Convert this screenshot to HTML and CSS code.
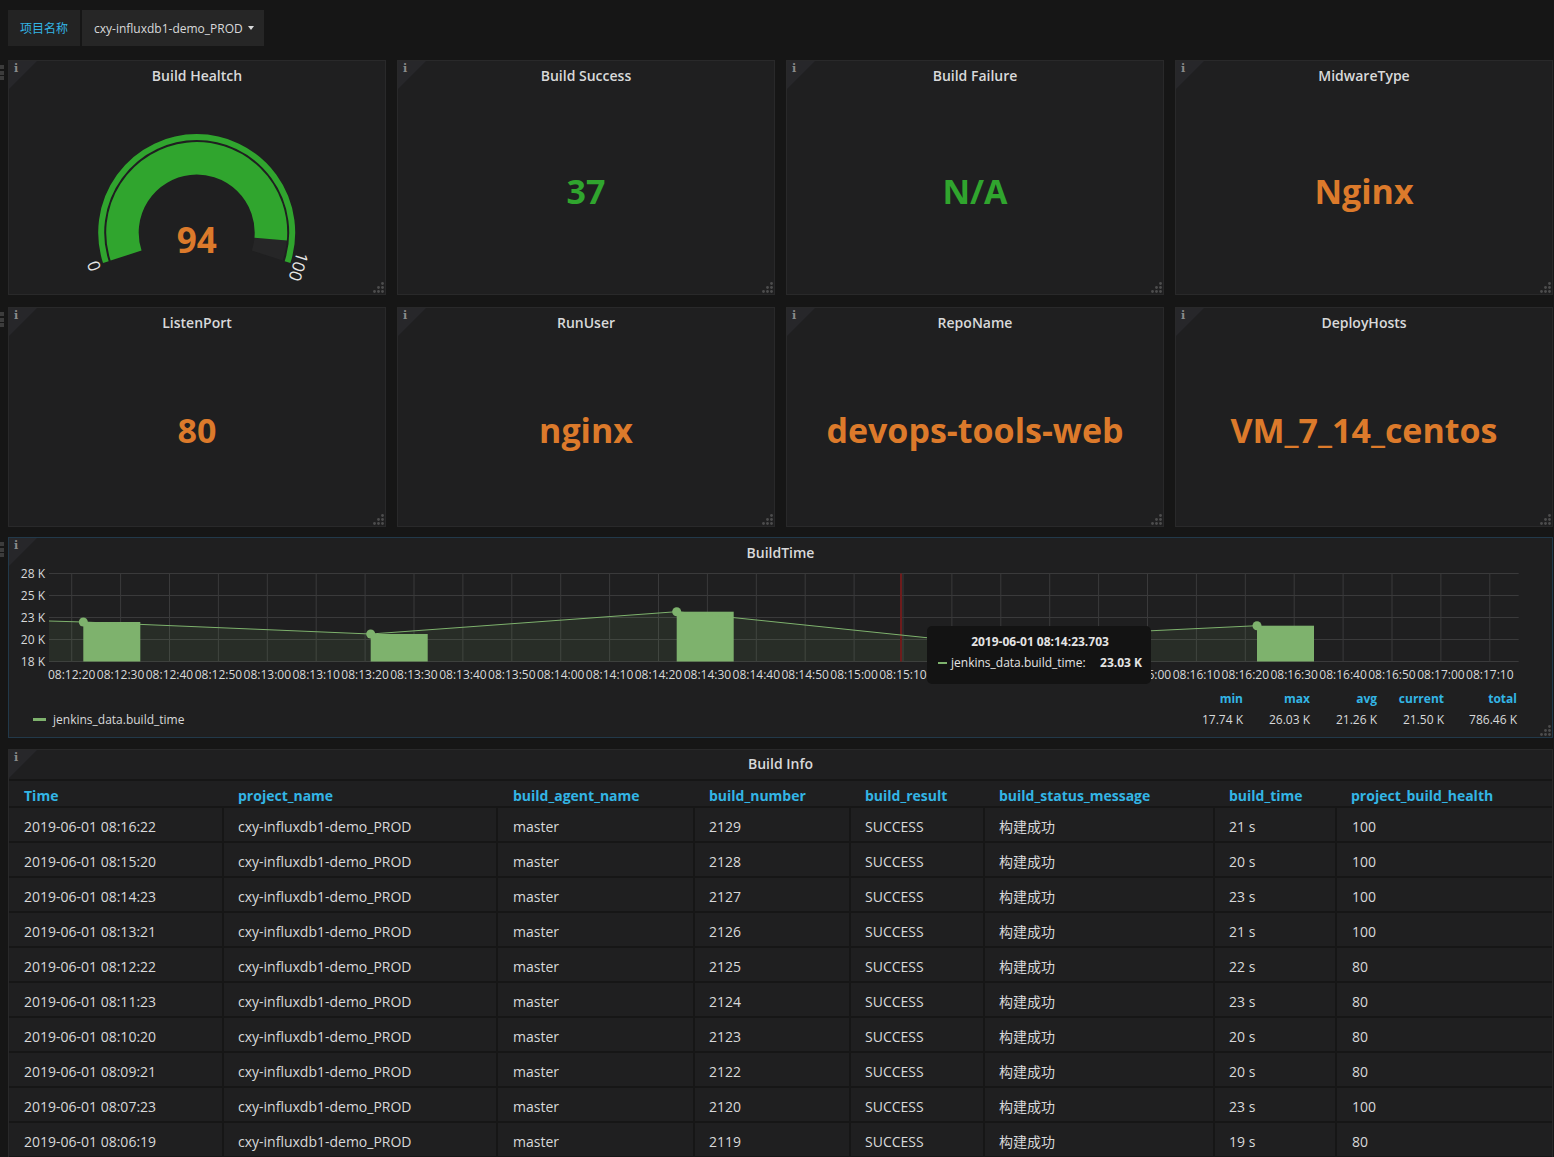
FILE: index.html
```html
<!DOCTYPE html>
<html>
<head>
<meta charset="utf-8">
<title>Dashboard</title>
<link rel="stylesheet" href="styles.css">
</head>
<body>
<div class="topbar">
  <div class="var-label">项目名称</div>
  <div class="var-value">cxy-influxdb1-demo_PROD<span class="caret"></span></div>
</div>

<div class="dash">
  <div class="row row1">
    <div class="panel">
      <span class="drag"><i></i><i></i><i></i></span>
      <span class="corner"></span><span class="info">i</span>
      <div class="ptitle">Build Healtch</div>
      <div class="pbody">
        <svg class="gauge" width="376" height="205" viewBox="0 0 376 205">
          <path d="M96.87 173.11 A95.5 95.5 0 1 1 278.53 173.11" fill="none" stroke="#30a52e" stroke-width="6"/>
          <path d="M261.66 150.12 A74.25 74.25 0 0 1 258.32 166.55" fill="none" stroke="#262627" stroke-width="32.5"/>
          <path d="M117.09 166.55 A74.25 74.25 0 1 1 261.66 150.12" fill="none" stroke="#30a52e" stroke-width="32.5"/>
          <text class="gtick" x="84.5" y="177" transform="rotate(252 84.5 177)">0</text>
          <text class="gtick" x="290" y="178" transform="rotate(108 290 178)">100</text>
          <text class="gval" x="187.7" y="164">94</text>
        </svg>
      </div>
      <svg class="rsz" width="11" height="11" viewBox="0 0 11 11"><circle cx="9.5" cy="1.5" r="1.4"/><circle cx="5.5" cy="5.5" r="1.4"/><circle cx="9.5" cy="5.5" r="1.4"/><circle cx="1.5" cy="9.5" r="1.4"/><circle cx="5.5" cy="9.5" r="1.4"/><circle cx="9.5" cy="9.5" r="1.4"/></svg>
    </div>
    <div class="panel">
      <span class="corner"></span><span class="info">i</span>
      <div class="ptitle">Build Success</div>
      <div class="pbody stat green">37</div>
      <svg class="rsz" width="11" height="11" viewBox="0 0 11 11"><circle cx="9.5" cy="1.5" r="1.4"/><circle cx="5.5" cy="5.5" r="1.4"/><circle cx="9.5" cy="5.5" r="1.4"/><circle cx="1.5" cy="9.5" r="1.4"/><circle cx="5.5" cy="9.5" r="1.4"/><circle cx="9.5" cy="9.5" r="1.4"/></svg>
    </div>
    <div class="panel">
      <span class="corner"></span><span class="info">i</span>
      <div class="ptitle">Build Failure</div>
      <div class="pbody stat green">N/A</div>
      <svg class="rsz" width="11" height="11" viewBox="0 0 11 11"><circle cx="9.5" cy="1.5" r="1.4"/><circle cx="5.5" cy="5.5" r="1.4"/><circle cx="9.5" cy="5.5" r="1.4"/><circle cx="1.5" cy="9.5" r="1.4"/><circle cx="5.5" cy="9.5" r="1.4"/><circle cx="9.5" cy="9.5" r="1.4"/></svg>
    </div>
    <div class="panel">
      <span class="corner"></span><span class="info">i</span>
      <div class="ptitle">MidwareType</div>
      <div class="pbody stat orange">Nginx</div>
      <svg class="rsz" width="11" height="11" viewBox="0 0 11 11"><circle cx="9.5" cy="1.5" r="1.4"/><circle cx="5.5" cy="5.5" r="1.4"/><circle cx="9.5" cy="5.5" r="1.4"/><circle cx="1.5" cy="9.5" r="1.4"/><circle cx="5.5" cy="9.5" r="1.4"/><circle cx="9.5" cy="9.5" r="1.4"/></svg>
    </div>
  </div>

  <div class="row row2">
    <div class="panel">
      <span class="drag"><i></i><i></i><i></i></span>
      <span class="corner"></span><span class="info">i</span>
      <div class="ptitle">ListenPort</div>
      <div class="pbody stat orange">80</div>
      <svg class="rsz" width="11" height="11" viewBox="0 0 11 11"><circle cx="9.5" cy="1.5" r="1.4"/><circle cx="5.5" cy="5.5" r="1.4"/><circle cx="9.5" cy="5.5" r="1.4"/><circle cx="1.5" cy="9.5" r="1.4"/><circle cx="5.5" cy="9.5" r="1.4"/><circle cx="9.5" cy="9.5" r="1.4"/></svg>
    </div>
    <div class="panel">
      <span class="corner"></span><span class="info">i</span>
      <div class="ptitle">RunUser</div>
      <div class="pbody stat orange">nginx</div>
      <svg class="rsz" width="11" height="11" viewBox="0 0 11 11"><circle cx="9.5" cy="1.5" r="1.4"/><circle cx="5.5" cy="5.5" r="1.4"/><circle cx="9.5" cy="5.5" r="1.4"/><circle cx="1.5" cy="9.5" r="1.4"/><circle cx="5.5" cy="9.5" r="1.4"/><circle cx="9.5" cy="9.5" r="1.4"/></svg>
    </div>
    <div class="panel">
      <span class="corner"></span><span class="info">i</span>
      <div class="ptitle">RepoName</div>
      <div class="pbody stat orange">devops-tools-web</div>
      <svg class="rsz" width="11" height="11" viewBox="0 0 11 11"><circle cx="9.5" cy="1.5" r="1.4"/><circle cx="5.5" cy="5.5" r="1.4"/><circle cx="9.5" cy="5.5" r="1.4"/><circle cx="1.5" cy="9.5" r="1.4"/><circle cx="5.5" cy="9.5" r="1.4"/><circle cx="9.5" cy="9.5" r="1.4"/></svg>
    </div>
    <div class="panel">
      <span class="corner"></span><span class="info">i</span>
      <div class="ptitle">DeployHosts</div>
      <div class="pbody stat orange">VM_7_14_centos</div>
      <svg class="rsz" width="11" height="11" viewBox="0 0 11 11"><circle cx="9.5" cy="1.5" r="1.4"/><circle cx="5.5" cy="5.5" r="1.4"/><circle cx="9.5" cy="5.5" r="1.4"/><circle cx="1.5" cy="9.5" r="1.4"/><circle cx="5.5" cy="9.5" r="1.4"/><circle cx="9.5" cy="9.5" r="1.4"/></svg>
    </div>
  </div>

  <div class="panel chart">
    <span class="drag"><i></i><i></i><i></i></span>
    <span class="corner"></span><span class="info">i</span>
    <div class="ptitle">BuildTime</div>
    <svg class="plot" width="1543" height="120" viewBox="0 0 1543 120">
      <path class="grid" d="M40 7.5H1509.7M40 29.5H1509.7M40 51.5H1509.7M40 73.5H1509.7M40 95.5H1509.7"/>
      <path class="grid" d="M62.7 7.5V95.5M111.6 7.5V95.5M160.5 7.5V95.5M209.4 7.5V95.5M258.3 7.5V95.5M307.2 7.5V95.5M356.1 7.5V95.5M405 7.5V95.5M453.9 7.5V95.5M502.8 7.5V95.5M551.7 7.5V95.5M600.6 7.5V95.5M649.5 7.5V95.5M698.4 7.5V95.5M747.3 7.5V95.5M796.2 7.5V95.5M845.1 7.5V95.5M894 7.5V95.5M942.9 7.5V95.5M991.8 7.5V95.5M1040.7 7.5V95.5M1089.6 7.5V95.5M1138.5 7.5V95.5M1187.4 7.5V95.5M1236.3 7.5V95.5M1285.2 7.5V95.5M1334.1 7.5V95.5M1383 7.5V95.5M1431.9 7.5V95.5M1480.8 7.5V95.5"/>
      <polygon class="area" points="40,55 74.3,56 361.7,68 667.7,45.7 942.9,74.3 1248,59.7 1248,95.5 40,95.5"/>
      <line x1="892" y1="7.5" x2="892" y2="95.5" class="annot"/>
      <g class="bars">
        <rect x="74.3" y="56" width="57" height="39.5"/>
        <rect x="361.7" y="68" width="57" height="27.5"/>
        <rect x="667.7" y="45.7" width="57" height="49.8"/>
        <rect x="942.9" y="74.3" width="57" height="21.2"/>
        <rect x="1248" y="59.7" width="57" height="35.8"/>
      </g>
      <polyline class="sline" points="40,55 74.3,56 361.7,68 667.7,45.7 942.9,74.3 1248,59.7"/>
      <g class="pts">
        <circle cx="74.3" cy="56" r="4.5"/>
        <circle cx="361.7" cy="68" r="4.5"/>
        <circle cx="667.7" cy="45.7" r="4.5"/>
        <circle cx="942.9" cy="74.3" r="4.5"/>
        <circle cx="1248" cy="59.7" r="4.5"/>
      </g>
      <g class="ax yax">
        <text x="36" y="11.6">28 K</text>
        <text x="36" y="33.6">25 K</text>
        <text x="36" y="55.6">23 K</text>
        <text x="36" y="77.6">20 K</text>
        <text x="36" y="99.6">18 K</text>
      </g>
      <g class="ax xax">
        <text x="62.7" y="113.3">08:12:20</text>
        <text x="111.6" y="113.3">08:12:30</text>
        <text x="160.5" y="113.3">08:12:40</text>
        <text x="209.4" y="113.3">08:12:50</text>
        <text x="258.3" y="113.3">08:13:00</text>
        <text x="307.2" y="113.3">08:13:10</text>
        <text x="356.1" y="113.3">08:13:20</text>
        <text x="405" y="113.3">08:13:30</text>
        <text x="453.9" y="113.3">08:13:40</text>
        <text x="502.8" y="113.3">08:13:50</text>
        <text x="551.7" y="113.3">08:14:00</text>
        <text x="600.6" y="113.3">08:14:10</text>
        <text x="649.5" y="113.3">08:14:20</text>
        <text x="698.4" y="113.3">08:14:30</text>
        <text x="747.3" y="113.3">08:14:40</text>
        <text x="796.2" y="113.3">08:14:50</text>
        <text x="845.1" y="113.3">08:15:00</text>
        <text x="894" y="113.3">08:15:10</text>
        <text x="1138.5" y="113.3">08:16:00</text>
        <text x="1187.4" y="113.3">08:16:10</text>
        <text x="1236.3" y="113.3">08:16:20</text>
        <text x="1285.2" y="113.3">08:16:30</text>
        <text x="1334.1" y="113.3">08:16:40</text>
        <text x="1383" y="113.3">08:16:50</text>
        <text x="1431.9" y="113.3">08:17:00</text>
        <text x="1480.8" y="113.3">08:17:10</text>
      </g>
    </svg>
    <div class="legend">
      <div class="series"><i></i><span>jenkins_data.build_time</span></div>
      <div class="stats">
        <span class="h">min</span><span class="h">max</span><span class="h">avg</span><span class="h">current</span><span class="h">total</span>
        <span>17.74 K</span><span>26.03 K</span><span>21.26 K</span><span>21.50 K</span><span>786.46 K</span>
      </div>
    </div>
    <div class="tooltip">
      <div class="tt-time">2019-06-01 08:14:23.703</div>
      <div class="tt-row"><i></i><span class="tt-name">jenkins_data.build_time:</span><span class="tt-val">23.03 K</span></div>
    </div>
    <svg class="rsz" width="11" height="11" viewBox="0 0 11 11"><circle cx="9.5" cy="1.5" r="1.4"/><circle cx="5.5" cy="5.5" r="1.4"/><circle cx="9.5" cy="5.5" r="1.4"/><circle cx="1.5" cy="9.5" r="1.4"/><circle cx="5.5" cy="9.5" r="1.4"/><circle cx="9.5" cy="9.5" r="1.4"/></svg>
  </div>

  <div class="panel tpanel">
    <span class="drag"><i></i><i></i><i></i></span>
    <span class="corner"></span><span class="info">i</span>
    <div class="ptitle ttl">Build Info</div>
    <table class="tbl">
      <thead>
        <tr>
          <th class="w1">Time</th><th class="w2">project_name</th><th class="w3">build_agent_name</th><th class="w4">build_number</th><th class="w5">build_result</th><th class="w6">build_status_message</th><th class="w7">build_time</th><th class="w8">project_build_health</th>
        </tr>
      </thead>
      <tbody>
        <tr><td>2019-06-01 08:16:22</td><td>cxy-influxdb1-demo_PROD</td><td>master</td><td>2129</td><td>SUCCESS</td><td>构建成功</td><td>21 s</td><td>100</td></tr>
        <tr><td>2019-06-01 08:15:20</td><td>cxy-influxdb1-demo_PROD</td><td>master</td><td>2128</td><td>SUCCESS</td><td>构建成功</td><td>20 s</td><td>100</td></tr>
        <tr><td>2019-06-01 08:14:23</td><td>cxy-influxdb1-demo_PROD</td><td>master</td><td>2127</td><td>SUCCESS</td><td>构建成功</td><td>23 s</td><td>100</td></tr>
        <tr><td>2019-06-01 08:13:21</td><td>cxy-influxdb1-demo_PROD</td><td>master</td><td>2126</td><td>SUCCESS</td><td>构建成功</td><td>21 s</td><td>100</td></tr>
        <tr><td>2019-06-01 08:12:22</td><td>cxy-influxdb1-demo_PROD</td><td>master</td><td>2125</td><td>SUCCESS</td><td>构建成功</td><td>22 s</td><td>80</td></tr>
        <tr><td>2019-06-01 08:11:23</td><td>cxy-influxdb1-demo_PROD</td><td>master</td><td>2124</td><td>SUCCESS</td><td>构建成功</td><td>23 s</td><td>80</td></tr>
        <tr><td>2019-06-01 08:10:20</td><td>cxy-influxdb1-demo_PROD</td><td>master</td><td>2123</td><td>SUCCESS</td><td>构建成功</td><td>20 s</td><td>80</td></tr>
        <tr><td>2019-06-01 08:09:21</td><td>cxy-influxdb1-demo_PROD</td><td>master</td><td>2122</td><td>SUCCESS</td><td>构建成功</td><td>20 s</td><td>80</td></tr>
        <tr><td>2019-06-01 08:07:23</td><td>cxy-influxdb1-demo_PROD</td><td>master</td><td>2120</td><td>SUCCESS</td><td>构建成功</td><td>23 s</td><td>100</td></tr>
        <tr><td>2019-06-01 08:06:19</td><td>cxy-influxdb1-demo_PROD</td><td>master</td><td>2119</td><td>SUCCESS</td><td>构建成功</td><td>19 s</td><td>80</td></tr>
      </tbody>
    </table>
  </div>
</div>
</body>
</html>
```

FILE: styles.css
```css
html, body {
  margin: 0;
  height: 1157px;
  overflow: hidden;
}
body {
  background: #161616;
  font-family: "Open Sans", "Noto Sans CJK SC", sans-serif;
  color: #d8d9da;
  font-size: 14px;
}

/* top variable bar */
.topbar {
  display: flex;
  gap: 2px;
  padding: 10px 8px 0;
  height: 36px;
}
.var-label {
  width: 72px;
  background: #232323;
  color: #33b5e5;
  font-size: 12px;
  display: flex;
  align-items: center;
  justify-content: center;
}
.var-value {
  background: #262626;
  color: #d8d9da;
  font-size: 12px;
  display: flex;
  align-items: center;
  gap: 5px;
  padding: 0 10px 0 12px;
}
.caret {
  width: 0;
  height: 0;
  border-left: 3.5px solid transparent;
  border-right: 3.5px solid transparent;
  border-top: 4px solid #d8d9da;
}

/* dashboard grid */
.dash {
  padding: 14px 1px 0 8px;
}
.row {
  display: grid;
  grid-template-columns: repeat(4, 1fr);
  gap: 11px;
}
.row1 .panel { height: 235px; }
.row2 { margin-top: 12px; }
.row2 .panel { height: 220px; }

.panel {
  position: relative;
  box-sizing: border-box;
  background: #1f1f20;
  border: 1px solid #29292a;
  display: flex;
  flex-direction: column;
}
.ptitle {
  text-align: center;
  font-weight: 600;
  font-size: 14px;
  line-height: 20px;
  padding: 5px 0 3px;
  color: #d8d9da;
}
.pbody {
  flex: 1;
  display: flex;
  align-items: center;
  justify-content: center;
  min-height: 0;
}
.stat {
  font-size: 34px;
  font-weight: 700;
  padding-bottom: 2px;
}
.green { color: #30a52e; }
.orange { color: #dc7a2b; }

.corner {
  position: absolute;
  left: 0;
  top: 0;
  width: 0;
  height: 0;
  border-top: 28px solid #27272a;
  border-right: 28px solid transparent;
}
.info {
  position: absolute;
  left: 5px;
  top: 1px;
  font-family: "DejaVu Serif", serif;
  font-weight: 700;
  font-size: 11px;
  line-height: 14px;
  color: #8a8a8a;
}
.drag {
  position: absolute;
  left: -9px;
  top: 4px;
  display: flex;
  flex-direction: column;
  gap: 1.5px;
}
.drag i {
  display: block;
  width: 4px;
  height: 4px;
  background: #3c3c3c;
}
.rsz {
  position: absolute;
  right: 1px;
  bottom: 1px;
  fill: #4d4d4d;
}

/* gauge */
.gauge { display: block; }
.gtick {
  font-family: "Open Sans", sans-serif;
  font-size: 17px;
  fill: #e6e6e6;
  text-anchor: middle;
  dominant-baseline: central;
}
.gval {
  font-family: "Open Sans", sans-serif;
  font-size: 35px;
  font-weight: 700;
  fill: #dc7a2b;
  text-anchor: middle;
}

/* chart panel */
.chart {
  margin-top: 10px;
  height: 201px;
  border-color: #22394a;
}
.plot { display: block; }
.grid {
  stroke: #3a3a3b;
  stroke-width: 1;
  fill: none;
}
.area { fill: rgba(126, 178, 109, 0.1); }
.annot { stroke: #6e1c1c; stroke-width: 2; }
.bars rect { fill: #7eb26d; }
.sline { fill: none; stroke: #7eb26d; stroke-width: 1; }
.pts circle { fill: #7eb26d; }
.ax text {
  font-family: "Open Sans", sans-serif;
  font-size: 12px;
  fill: #d8d9da;
}
.yax text { text-anchor: end; }
.xax text { text-anchor: middle; }

.legend {
  display: flex;
  justify-content: space-between;
  align-items: flex-end;
  padding: 2px 35px 0 24px;
  font-size: 12px;
}
.series {
  display: flex;
  align-items: center;
  gap: 7px;
  line-height: 21px;
}
.series i {
  display: block;
  width: 13px;
  height: 3px;
  background: #7eb26d;
}
.stats {
  display: grid;
  grid-template-columns: 67px 67px 67px 67px 73px;
  line-height: 21px;
  text-align: right;
}
.stats .h {
  color: #33b5e5;
  font-weight: 700;
}

.tooltip {
  position: absolute;
  left: 918px;
  top: 88px;
  width: 224px;
  height: 58px;
  box-sizing: border-box;
  padding: 6px 9px 0 11px;
  background: #131313;
  border-radius: 5px;
  font-size: 12px;
  color: #e4e4e4;
}
.tt-time {
  text-align: center;
  font-weight: 700;
  line-height: 20px;
}
.tt-row {
  display: flex;
  align-items: center;
  line-height: 22px;
}
.tt-row i {
  display: block;
  width: 9px;
  height: 2px;
  background: #7eb26d;
  margin-right: 4px;
}
.tt-name { flex: 1; }
.tt-val { font-weight: 700; }

/* table panel */
.tpanel {
  margin-top: 11px;
  height: 430px;
  overflow: hidden;
}
.ttl {
  padding: 4px 0 5px;
}
.tbl {
  width: 100%;
  table-layout: fixed;
  border-collapse: separate;
  border-spacing: 0;
  font-size: 14px;
}
.tbl th {
  box-sizing: border-box;
  text-align: left;
  color: #33b5e5;
  font-weight: 700;
  line-height: 18px;
  padding: 6px 0 1px 14px;
  border-top: 2px solid #161616;
  border-bottom: 2px solid #161616;
  white-space: nowrap;
}
.tbl th.w1 { width: 215px; padding-left: 15px; }
.tbl th.w2 { width: 274px; }
.tbl th.w3 { width: 197px; padding-left: 15px; }
.tbl th.w4 { width: 156px; }
.tbl th.w5 { width: 134px; }
.tbl th.w6 { width: 230px; }
.tbl th.w7 { width: 122px; }
.tbl td {
  line-height: 18px;
  padding: 10px 0 5px 14px;
  border-bottom: 2px solid #161616;
  border-right: 2px solid #161616;
  white-space: nowrap;
  color: #d8d9da;
}
.tbl td:first-child { padding-left: 15px; }
.tbl td:nth-child(3) { padding-left: 15px; }
.tbl td:last-child { border-right: 0; padding-left: 15px; }
```
